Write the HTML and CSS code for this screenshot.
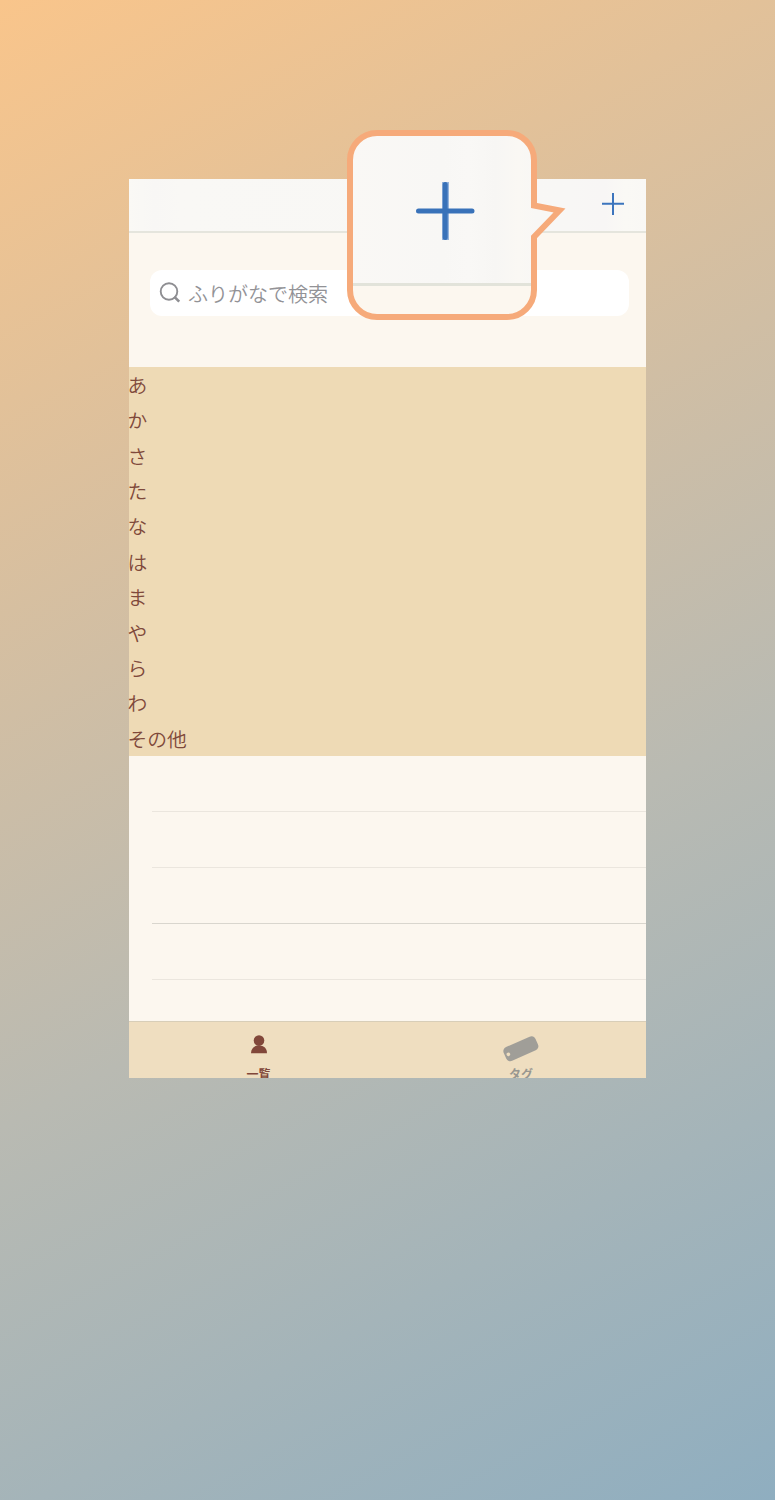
FILE: index.html
```html
<!DOCTYPE html>
<html lang="ja">
<head>
<meta charset="utf-8">
<title>一覧</title>
<link rel="stylesheet" href="styles.css">
</head>
<body>
<main class="phone">
  <header class="navbar">
    <svg class="add" viewBox="0 0 22 22"><path d="M0 10.8H22M11 0V22"/></svg>
  </header>
  <section class="search-area">
    <div class="search">
      <svg class="lens" viewBox="0 0 22 22"><circle cx="9" cy="8.5" r="8.3"/><path class="handle" d="M14.2 13.7L19.2 18.7"/></svg>
      <span>ふりがなで検索</span>
    </div>
  </section>
  <ul class="index">
    <li>あ</li><li>か</li><li>さ</li><li>た</li><li>な</li><li>は</li><li>ま</li><li>や</li><li>ら</li><li>わ</li><li>その他</li>
  </ul>
  <div class="rows"><div class="row"></div><div class="row"></div><div class="row strong"></div><div class="row"></div></div>
  <nav class="tabs">
    <div class="tab active">
      <svg class="person" viewBox="0 0 16 19"><circle cx="8" cy="5.6" r="5.3"/><path d="M0 18.3C0 13.6 3 10.6 8 10.6S16 13.6 16 18.3Z"/></svg>
      <span>一覧</span>
    </div>
    <div class="tab">
      <svg class="tag" viewBox="0 0 36 28"><g transform="rotate(-24 18 14)"><rect x="0.6" y="6.2" width="34.8" height="15" rx="4.5"/><circle class="hole" cx="4.3" cy="13.7" r="1.8"/></g></svg>
      <span>タグ</span>
    </div>
  </nav>
  <svg class="callout" viewBox="0 0 220 192">
    <defs><clipPath id="bubble"><rect x="3" y="3" width="184" height="184" rx="27"/></clipPath>
    <linearGradient id="bar"><stop offset="0" stop-color="#faf8f5"/><stop offset=".5" stop-color="#f8f7f5"/><stop offset=".64" stop-color="#f9f8f6"/><stop offset=".78" stop-color="#f7f6f4"/><stop offset=".9" stop-color="#faf8f4"/><stop offset="1" stop-color="#f8f7f5"/></linearGradient></defs>
    <path fill="#f8f7f5" d="M186 76L213 80.5L186 107Z"/>
    <g clip-path="url(#bubble)"><rect width="190" height="154" fill="url(#bar)"/><rect y="153" width="190" height="3" fill="#e2e3da"/><rect y="156" width="190" height="35" fill="#fcf7ef"/></g>
    <path class="outline" d="M187 75.5V30A27 27 0 0 0 160 3H30A27 27 0 0 0 3 30V160A27 27 0 0 0 30 187H160A27 27 0 0 0 187 160V107L212.5 80.5Z"/>
    <path class="plus-glow" d="M98.5 52V110"/>
    <path class="plus" d="M71.5 81H125M98.2 54.5V107.5"/>
  </svg>
</main>
</body>
</html>
```
FILE: styles.css
```css
* { box-sizing: border-box; }
body {
  margin: 0;
  height: 1500px;
  padding: 179px 129px 0;
  overflow: hidden;
  background: linear-gradient(152deg, #f9c58b, #b9bab2 59%, #8faec0);
  font-family: "Noto Sans CJK JP", sans-serif;
}
.phone { position: relative; width: 517px; height: 899px; display: flex; flex-direction: column; background: #fcf7ef; }
.navbar {
  height: 54px;
  flex: none;
  display: flex;
  justify-content: flex-end;
  padding: 14px 22px 0 0;
  border-bottom: 2px solid #e5e5dd;
  background: linear-gradient(90deg, #faf9f5, #f8f7f5 5%, #f9f8f5 10%, #f8f7f5 85%, #f8f6f5 92%, #faf9f5 96%, #f9f8f5);
}
.add { width: 22px; height: 22px; fill: none; stroke: #3c75bd; stroke-width: 2; }
.search-area { height: 134px; flex: none; padding: 37px 17px 0 21px; }
.search { height: 46px; display: flex; align-items: center; padding: 2px 0 0 10px; border-radius: 12px; background: #fff; color: #929296; font-size: 20px; font-weight: 350; line-height: 30px; }
.lens { width: 22px; height: 22px; margin-right: 6px; overflow: visible; fill: none; stroke: #8e8e92; stroke-width: 1.9; }
.handle { stroke-width: 2.6; }
.index { flex: none; height: 389px; margin: 0; padding: 0; list-style: none; background: #eedab5; color: #7f493b; font-size: 19.8px; font-weight: 350; line-height: 35.36px; }
.index li { height: 35.36px; text-indent: -1.5px; }
.rows { height: 265px; flex: none; padding-left: 23px; }
.row { height: 56px; border-bottom: 1px solid #ebe6de; }
.strong { border-color: #d9d6ce; }
.tabs { height: 57px; flex: none; display: flex; overflow: hidden; border-top: 1px solid #d8ceb8; background: #efdec0; }
.tab { width: 259px; flex: none; display: flex; flex-direction: column; align-items: center; color: #989790; font-size: 12px; font-weight: 700; line-height: 16px; }
.tab:last-child { width: 266px; }
.tab span { flex: none; }
.active { color: #81473a; }
.person { flex: none; width: 16px; height: 19px; margin: 13px 0 12px; fill: #81473a; }
.tag { flex: none; width: 36px; height: 28px; margin: 13px 0 3px; fill: #a09e98; }
.hole { fill: #efdec0; }
.callout { position: absolute; left: 218px; top: -49px; width: 220px; height: 192px; }
.outline { fill: none; stroke: #f6aa7a; stroke-width: 6; stroke-miterlimit: 10; }
.plus { fill: none; stroke: #3972b9; stroke-width: 5; stroke-linecap: round; }
.plus-glow { stroke: #94b3dc; stroke-width: 7; }
```
